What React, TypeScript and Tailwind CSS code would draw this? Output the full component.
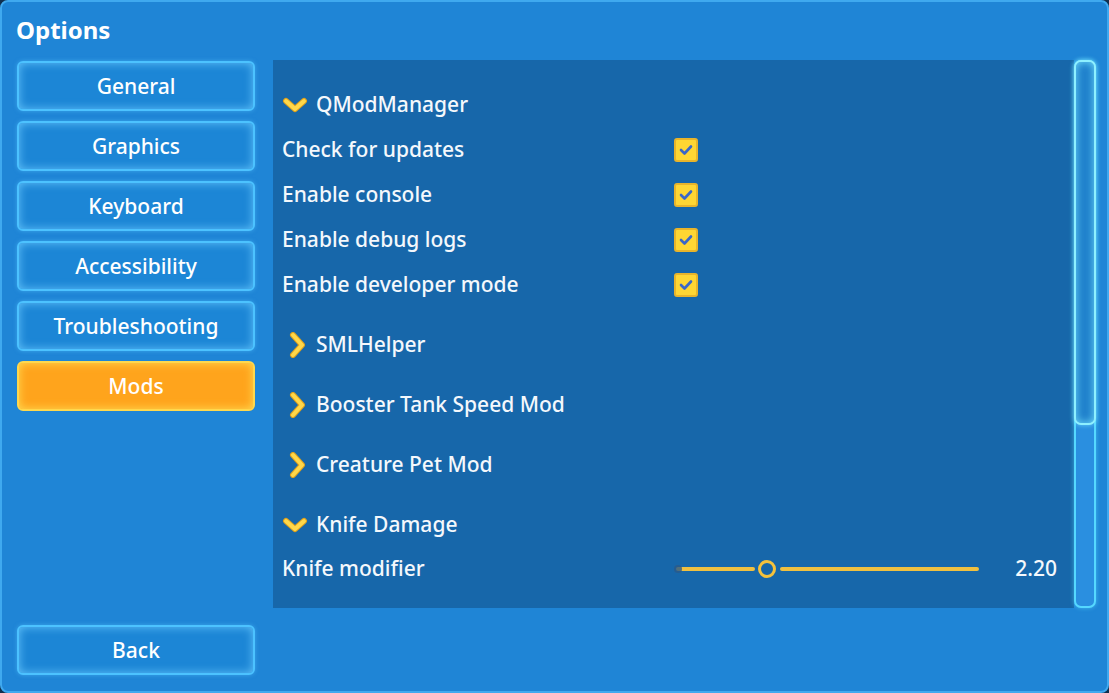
import React from 'react';

const font = { fontFamily: '"Noto Sans", "Open Sans", sans-serif' };

const navItems = ['General', 'Graphics', 'Keyboard', 'Accessibility', 'Troubleshooting', 'Mods'];

const ChevronDown = () => (
  <svg width="26" height="16" viewBox="0 0 26 16" className="shrink-0">
    <polyline points="4,4 13,12 22,4" fill="none" stroke="#e0a21c" strokeWidth="6" strokeLinecap="round" strokeLinejoin="round" />
    <polyline points="4,4 13,12 22,4" fill="none" stroke="#ffd84a" strokeWidth="4" strokeLinecap="round" strokeLinejoin="round" />
  </svg>
);

const ChevronRight = () => (
  <svg width="24" height="26" viewBox="0 0 24 26" className="shrink-0">
    <polyline points="9,3 18,13 9,23" fill="none" stroke="#e0a21c" strokeWidth="6" strokeLinecap="round" strokeLinejoin="round" />
    <polyline points="9,3 18,13 9,23" fill="none" stroke="#ffd84a" strokeWidth="4" strokeLinecap="round" strokeLinejoin="round" />
  </svg>
);

const Checkbox = () => (
  <div className="w-[24px] h-[24px] rounded-[3px] bg-[#ffd633] border-2 border-[#e9b42a] flex items-center justify-center">
    <svg width="14" height="12" viewBox="0 0 14 12">
      <polyline points="2,6 5.5,9.5 12,2.5" fill="none" stroke="#3a66c9" strokeWidth="2.6" strokeLinecap="round" strokeLinejoin="round" />
    </svg>
  </div>
);

const NavButton = ({ label, active }: { label: string; active?: boolean }) => (
  <button
    className={`h-[50px] w-full rounded-[6px] border-2 pt-[2px] text-[21px] font-medium text-white ${
      active
        ? 'bg-[#ffa41c] border-[#ffd84d] shadow-[inset_0_0_10px_rgba(255,225,90,0.9)]'
        : 'bg-[#1c86d6] border-[#4cc2ff] shadow-[inset_0_0_10px_rgba(110,205,255,0.85),0_0_4px_rgba(90,200,255,0.5)]'
    }`}
  >
    {label}
  </button>
);

const Header = ({ label, open, tall }: { label: string; open?: boolean; tall?: boolean }) => (
  <div className={`flex items-center ${tall ? 'h-[60px]' : 'h-[45px]'}`}>
    <div className="w-[34px] flex justify-start">{open ? <ChevronDown /> : <span className="ml-[2px]"><ChevronRight /></span>}</div>
    <span className="text-[21px] font-medium text-[#f4f8fc]">{label}</span>
  </div>
);

const ToggleRow = ({ label }: { label: string }) => (
  <div className="flex items-center h-[45px]">
    <span className="w-[392px] text-[21px] font-medium text-[#f4f8fc]">{label}</span>
    <Checkbox />
  </div>
);

export default function App() {
  return (
    <div className="w-[1109px] h-[693px] bg-[#10304f]" style={font}>
      <div className="w-full h-full rounded-[8px] border-2 border-[#3fa9ef] bg-[#1f85d6] flex flex-col">
        <div className="h-[59px] pl-[14px] flex items-center">
          <h1 className="text-[24px] font-bold text-white leading-none -mt-[3px]">Options</h1>
        </div>
        <div className="flex gap-[18px] pl-[15px]">
          <div className="w-[238px] h-[614px] flex flex-col justify-between">
            <div className="flex flex-col gap-[10px]">
              {navItems.map(n => (
                <NavButton key={n} label={n} active={n === 'Mods'} />
              ))}
            </div>
            <NavButton label="Back" />
          </div>
          <div className="flex h-[548px] -mt-px">
            <div className="w-[801px] h-full bg-[#1767aa] pl-[9px] pr-[17px] pt-[22px]">
              <Header label="QModManager" open />
              <ToggleRow label="Check for updates" />
              <ToggleRow label="Enable console" />
              <ToggleRow label="Enable debug logs" />
              <ToggleRow label="Enable developer mode" />
              <div className="mt-[8px]">
                <Header label="SMLHelper" tall />
                <Header label="Booster Tank Speed Mod" tall />
                <Header label="Creature Pet Mod" tall />
              </div>
              <div className="mt-[7px]">
                <Header label="Knife Damage" open />
              </div>
              <div className="flex items-center h-[44px]">
                <span className="w-[391px] text-[21px] font-medium text-[#f4f8fc]">Knife modifier</span>
                <svg width="310" height="24" viewBox="0 0 310 24" className="shrink-0">
                  <line x1="5" y1="12" x2="80" y2="12" stroke="#f0c040" strokeWidth="4" strokeLinecap="round" />
                  <line x1="109" y1="12" x2="304" y2="12" stroke="#f0c040" strokeWidth="4" strokeLinecap="round" />
                  <circle cx="5" cy="12" r="4" fill="#2a5a8a" opacity="0.8" />
                  <circle cx="94" cy="12" r="7.5" fill="#1767aa" stroke="#f5c23c" strokeWidth="3" />
                </svg>
                <span className="ml-auto text-[21px] font-medium text-[#f4f8fc]">2.20</span>
              </div>
            </div>
            <div className="w-[22px] h-full rounded-[7px] border-2 border-[#55d8ff] bg-[#2a8fe0] shadow-[0_0_4px_rgba(90,220,255,0.6)] flex flex-col">
              <div className="h-[365px] -m-[2px] rounded-[7px] border-2 border-[#8ef0ff] bg-[#1f80cc] shadow-[inset_0_0_8px_rgba(120,230,255,0.9),0_0_5px_rgba(120,230,255,0.8)]" />
            </div>
          </div>
        </div>
      </div>
    </div>
  );
}
